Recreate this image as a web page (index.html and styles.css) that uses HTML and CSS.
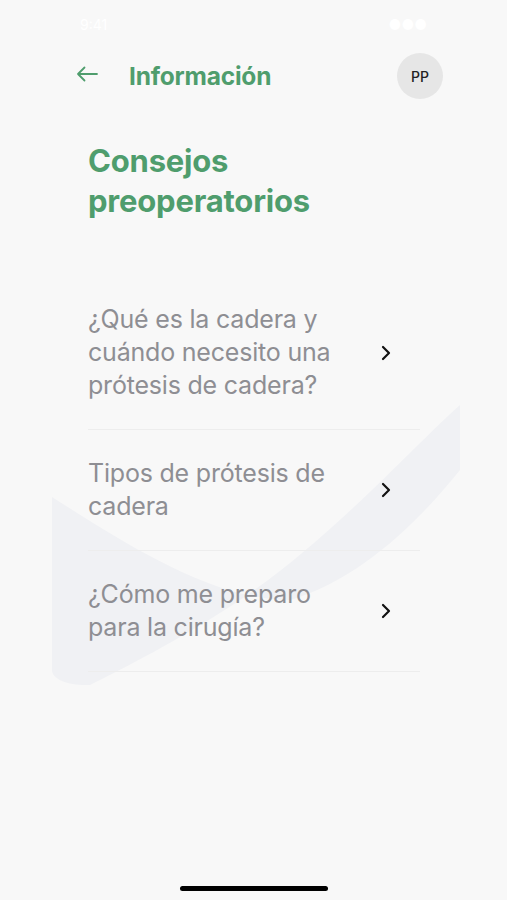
FILE: index.html
```html
<!DOCTYPE html>
<html lang="es">
<head>
  <meta charset="UTF-8">
  <title>Información</title>
  <link rel="stylesheet" href="styles.css">
</head>
<body>
  <div class="screen">
    <svg class="swoosh" width="507" height="900" viewBox="0 0 507 900">
      <path d="M52 497 C120 540 210 600 290 600 C360 580 420 520 460 470 L460 405 C420 440 330 540 240 600 C180 640 120 670 90 685 C70 686 52 680 52 670 Z" fill="#f0f1f4"/>
    </svg>

    <div class="status-bar">
      <span>9:41</span>
      <span>●●●</span>
    </div>

    <header class="top-bar">
      <div class="top-left">
        <svg class="back" width="22" height="16" viewBox="0 0 22 16">
          <path d="M21 8 H2 M8.5 1.5 L2 8 L8.5 14.5" fill="none" stroke="#4f9d6d" stroke-width="1.8" stroke-linecap="round" stroke-linejoin="round"/>
        </svg>
        <span class="top-title">Información</span>
      </div>
      <div class="avatar">PP</div>
    </header>

    <h1 class="page-title">Consejos preoperatorios</h1>

    <ul class="topic-list">
      <li class="topic">
        <span class="topic-text">¿Qué es la cadera y cuándo necesito una prótesis de cadera?</span>
        <svg class="chev" width="10" height="16" viewBox="0 0 10 16"><path d="M2 2 L8 8 L2 14" fill="none" stroke="#111" stroke-width="2.2" stroke-linecap="round" stroke-linejoin="round"/></svg>
      </li>
      <li class="topic">
        <span class="topic-text">Tipos de prótesis de cadera</span>
        <svg class="chev" width="10" height="16" viewBox="0 0 10 16"><path d="M2 2 L8 8 L2 14" fill="none" stroke="#111" stroke-width="2.2" stroke-linecap="round" stroke-linejoin="round"/></svg>
      </li>
      <li class="topic">
        <span class="topic-text">¿Cómo me preparo para la cirugía?</span>
        <svg class="chev" width="10" height="16" viewBox="0 0 10 16"><path d="M2 2 L8 8 L2 14" fill="none" stroke="#111" stroke-width="2.2" stroke-linecap="round" stroke-linejoin="round"/></svg>
      </li>
    </ul>

    <div class="home-indicator"></div>
  </div>
</body>
</html>
```

FILE: styles.css
```css
html, body {
  margin: 0;
  padding: 0;
  font-family: Inter, "Liberation Sans", sans-serif;
  background-color: #f8f8f8;
}
.screen {
  position: relative;
  width: 507px;
  height: 900px;
  overflow: hidden;
  display: flex;
  flex-direction: column;
}
.swoosh {
  position: absolute;
  top: 0;
  left: 0;
  z-index: 0;
}
.status-bar, .top-bar, .page-title, .topic-list {
  position: relative;
  z-index: 1;
}
.status-bar {
  height: 52px;
  display: flex;
  justify-content: space-between;
  padding: 0 80px;
  font-size: 14px;
  color: #fff;
  line-height: 50px;
}
.top-bar {
  display: flex;
  align-items: center;
  justify-content: space-between;
  padding: 0 64px 0 76px;
  height: 48px;
}
.top-left {
  display: flex;
  align-items: center;
  gap: 31px;
}
.back {
  margin-top: -4px;
}
.top-title {
  font-size: 24.5px;
  font-weight: 700;
  color: #4f9d6d;
  letter-spacing: -0.2px;
}
.avatar {
  width: 46px;
  height: 46px;
  border-radius: 50%;
  background-color: #e6e6e6;
  display: flex;
  align-items: center;
  justify-content: center;
  font-size: 14px;
  font-weight: 500;
  color: #222;
}
.page-title {
  margin: 41px 0 0 88px;
  width: 280px;
  font-size: 31px;
  line-height: 40px;
  font-weight: 700;
  color: #4f9d6d;
  letter-spacing: -0.2px;
}
.topic-list {
  list-style: none;
  margin: 55px 87px 0 88px;
  padding: 0;
}
.topic {
  display: flex;
  align-items: center;
  justify-content: space-between;
  padding: 27px 0 27px;
  border-bottom: 1px solid #ededed;
}
.topic-text {
  width: 270px;
  font-size: 25px;
  line-height: 33px;
  color: #8e8e93;
  letter-spacing: -0.2px;
}
.chev {
  margin-right: 29px;
}
.home-indicator {
  position: absolute;
  left: 180px;
  bottom: 9px;
  width: 148px;
  height: 5px;
  border-radius: 3px;
  background-color: #000;
}
```
